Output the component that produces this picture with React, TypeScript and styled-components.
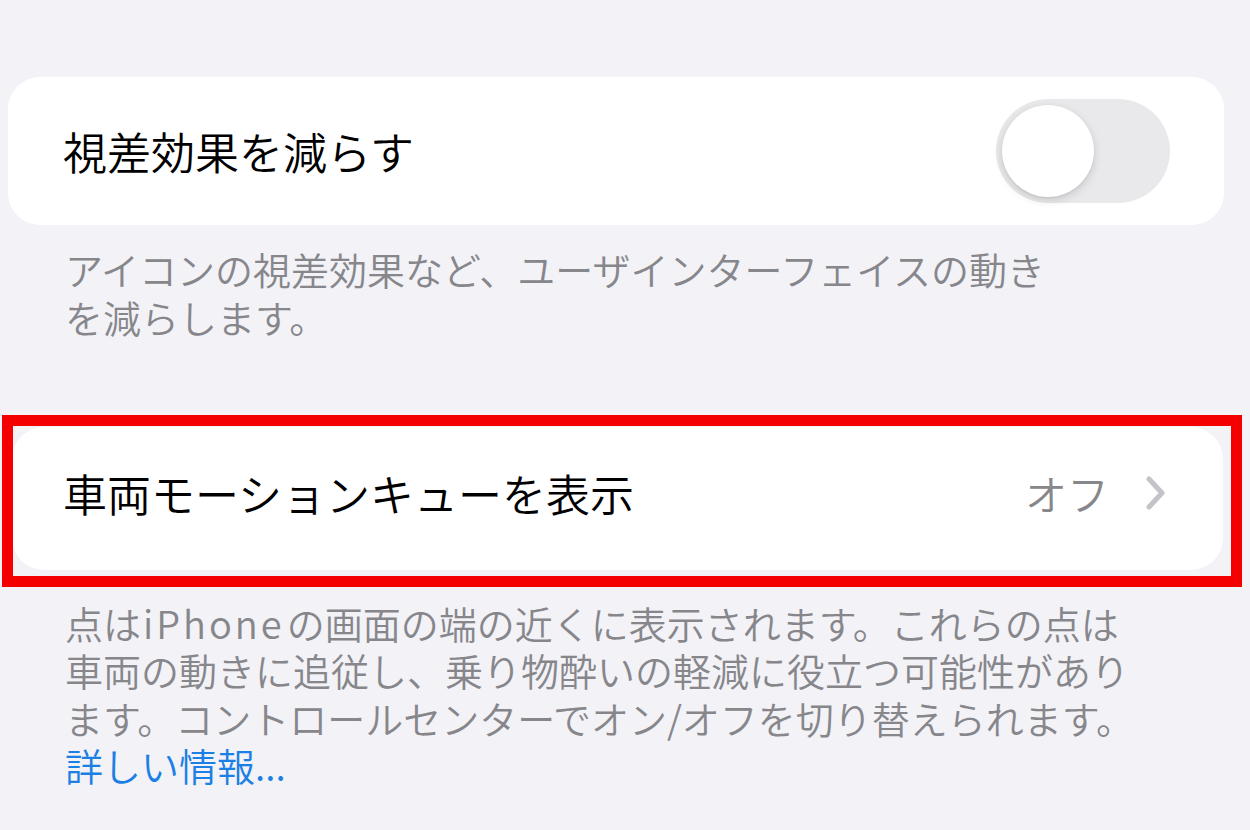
import React from 'react';
import styled, { createGlobalStyle } from 'styled-components';

const GlobalStyle = createGlobalStyle`
  html, body {
    margin: 0;
    padding: 0;
    background: #f2f2f7;
  }
  body {
    font-family: 'Noto Sans CJK JP', 'Noto Sans', sans-serif;
    font-weight: 350;
    -webkit-font-smoothing: antialiased;
  }
`;

function App() {
  return (
    <>
      <GlobalStyle />
      <Page>
        <Card>
          <RowTitle>視差効果を減らす</RowTitle>
          <Toggle aria-label="視差効果を減らす">
            <Knob />
          </Toggle>
        </Card>
        <Footnote>
          アイコンの視差効果など、ユーザインターフェイスの動き
          <br />
          を減らします。
        </Footnote>

        <Highlighted>
          <Card $inset>
            <RowTitle>車両モーションキューを表示</RowTitle>
            <Detail>
              <DetailValue>オフ</DetailValue>
              <svg width="22" height="34" viewBox="0 0 22 34" fill="none">
                <path d="M4 3 L17 17 L4 31" stroke="#c4c4c8" strokeWidth="5" strokeLinecap="round" strokeLinejoin="round" />
              </svg>
            </Detail>
          </Card>
          <RedFrame />
        </Highlighted>
        <Footnote $tight>
          点は<Latin>iPhone</Latin>の画面の端の近くに表示されます。これらの点は
          <br />
          車両の動きに追従し、乗り物酔いの軽減に役立つ可能性があり
          <br />
          ます。コントロールセンターでオン/オフを切り替えられます。
          <br />
          <Link>詳しい情報...</Link>
        </Footnote>
      </Page>
    </>
  );
}

export default App;

const Page = styled.div`
  display: flex;
  flex-direction: column;
  padding: 77px 26px 0 8px;
  width: 1250px;
  height: 830px;
  box-sizing: border-box;
  overflow: hidden;
`;

const Card = styled.div<{ $inset?: boolean }>`
  display: flex;
  align-items: center;
  justify-content: space-between;
  box-sizing: border-box;
  height: ${({ $inset }) => ($inset ? '143px' : '148px')};
  margin-left: ${({ $inset }) => ($inset ? '4px' : '0')};
  margin-right: ${({ $inset }) => ($inset ? '1px' : '0')};
  padding: ${({ $inset }) => ($inset ? '0 56px 12px 51px' : '0 54px 0 55px')};
  background: #ffffff;
  border-radius: 32px;
`;

const RowTitle = styled.div`
  font-size: 44px;
  line-height: 1;
  color: #000000;
`;

const Toggle = styled.div`
  display: flex;
  align-items: center;
  box-sizing: border-box;
  width: 174px;
  height: 104px;
  padding: 0 6px;
  background: #e9e9eb;
  border-radius: 52px;
`;

const Knob = styled.div`
  width: 92px;
  height: 92px;
  border-radius: 50%;
  background: #ffffff;
  box-shadow: 0 3px 10px rgba(0, 0, 0, 0.14), 0 1px 2px rgba(0, 0, 0, 0.08);
`;

const Footnote = styled.div<{ $tight?: boolean }>`
  padding: ${({ $tight }) => ($tight ? '29px 0 0 57px' : '20px 0 0 57px')};
  font-size: 38px;
  line-height: ${({ $tight }) => ($tight ? '47.3px' : '48px')};
  color: #86868b;
  white-space: nowrap;
`;

const Latin = styled.span`
  letter-spacing: 3px;
  margin: 0 2px;
`;

const Highlighted = styled.div`
  position: relative;
  margin-top: 86px;
`;

const RedFrame = styled.div`
  position: absolute;
  top: -12px;
  left: -6px;
  right: -18px;
  bottom: -17px;
  border: 11px solid #f40000;
  pointer-events: none;
`;

const Detail = styled.div`
  display: flex;
  align-items: center;
  gap: 36px;
`;

const DetailValue = styled.span`
  font-size: 42px;
  line-height: 1;
  color: #86868b;
`;

const Link = styled.span`
  color: #1b7fe3;
`;
